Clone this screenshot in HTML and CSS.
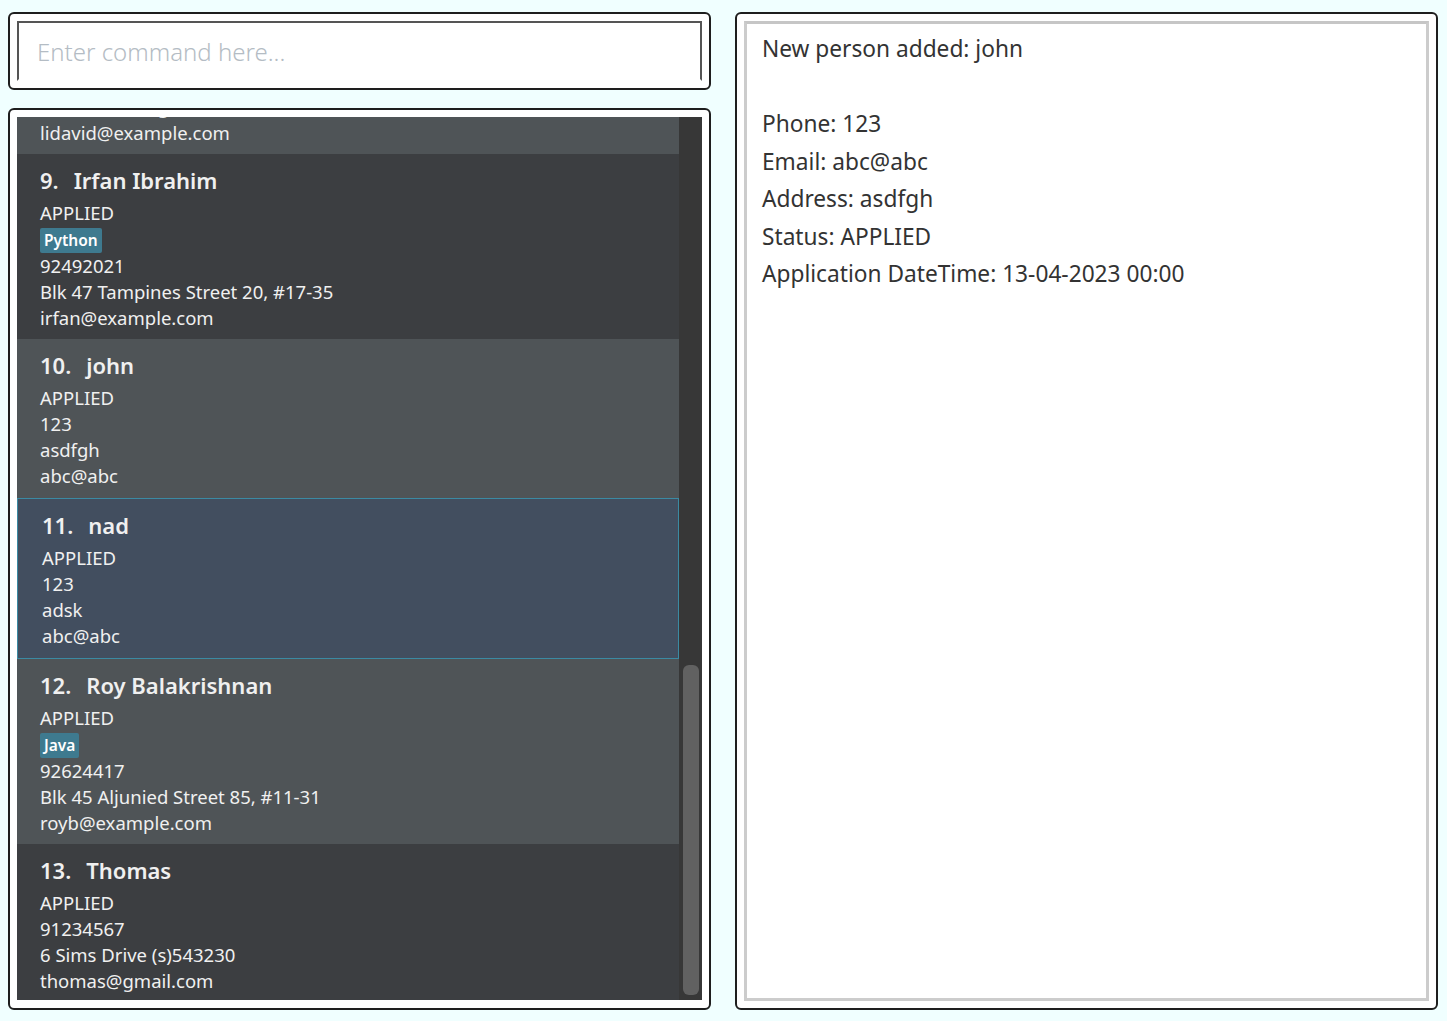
FILE: index.html
```html
<!DOCTYPE html>
<html>
<head>
<meta charset="utf-8">
<link rel="stylesheet" href="styles.css">
</head>
<body>
<div class="app">
  <div class="left">
    <div class="frame cmd-frame">
      <div class="cmd-box">Enter command here...</div>
    </div>
    <div class="frame list-frame">
      <div class="list-inner">
        <div class="cards">
          <div class="card light has-tag partial">
            <div class="title"><span class="idx">8.</span>David Li</div>
            <div class="line">APPLIED</div>
            <div class="tags"><span class="tag">family</span></div>
            <div class="line">91031282</div>
            <div class="line">Blk 436 Serangoon Gardens Street 26, #16-43</div>
            <div class="line">lidavid@example.com</div>
          </div>
          <div class="card dark has-tag">
            <div class="title"><span class="idx">9.</span>Irfan Ibrahim</div>
            <div class="line">APPLIED</div>
            <div class="tags"><span class="tag">Python</span></div>
            <div class="line">92492021</div>
            <div class="line">Blk 47 Tampines Street 20, #17-35</div>
            <div class="line">irfan@example.com</div>
          </div>
          <div class="card light">
            <div class="title"><span class="idx">10.</span>john</div>
            <div class="line">APPLIED</div>
            <div class="line">123</div>
            <div class="line">asdfgh</div>
            <div class="line">abc@abc</div>
          </div>
          <div class="card selected">
            <div class="title"><span class="idx">11.</span>nad</div>
            <div class="line">APPLIED</div>
            <div class="line">123</div>
            <div class="line">adsk</div>
            <div class="line">abc@abc</div>
          </div>
          <div class="card light has-tag">
            <div class="title"><span class="idx">12.</span>Roy Balakrishnan</div>
            <div class="line">APPLIED</div>
            <div class="tags"><span class="tag">Java</span></div>
            <div class="line">92624417</div>
            <div class="line">Blk 45 Aljunied Street 85, #11-31</div>
            <div class="line">royb@example.com</div>
          </div>
          <div class="card dark">
            <div class="title"><span class="idx">13.</span>Thomas</div>
            <div class="line">APPLIED</div>
            <div class="line">91234567</div>
            <div class="line">6 Sims Drive (s)543230</div>
            <div class="line">thomas@gmail.com</div>
          </div>
        </div>
        <div class="scrollbar"><div class="thumb"></div></div>
      </div>
    </div>
  </div>
  <div class="frame result-frame">
    <div class="result-box">
      <div class="r-line">New person added: john</div>
      <div class="r-line">&nbsp;</div>
      <div class="r-line">Phone: 123</div>
      <div class="r-line">Email: abc@abc</div>
      <div class="r-line">Address: asdfgh</div>
      <div class="r-line">Status: APPLIED</div>
      <div class="r-line">Application DateTime: 13-04-2023 00:00</div>
    </div>
  </div>
</div>
</body>
</html>
```
FILE: styles.css
```css
html, body {
  margin: 0;
  padding: 0;
  background: #f0ffff;
  font-family: "Noto Sans", "Open Sans", sans-serif;
}
.app {
  display: flex;
  gap: 24px;
  padding: 12px 0 0 8px;
  height: 998px;
}
.left {
  width: 703px;
  display: flex;
  flex-direction: column;
  gap: 18px;
}
.frame {
  box-sizing: border-box;
  border: 2px solid #1e1e1e;
  border-radius: 6px;
  background: #ffffff;
  padding: 7px;
}
.cmd-frame {
  height: 78px;
}
.cmd-box {
  box-sizing: border-box;
  height: 60px;
  border-left: 2px solid #555;
  border-top: 2px solid #555;
  border-right: 2px solid #555;
  border-bottom: 2px solid #fff;
  color: #b4bcc4;
  font-size: 24px;
  padding: 0 0 0 18px;
  line-height: 58px;
  font-weight: 300;
}
.list-frame {
  height: 902px;
}
.list-inner {
  height: 883px;
  display: flex;
  overflow: hidden;
  background: #3a3a3a;
}
.cards {
  width: 662px;
  overflow: hidden;
  display: flex;
  flex-direction: column;
}
.card {
  box-sizing: border-box;
  padding: 11px 0 0 23px;
  color: #f0f0f0;
  flex-shrink: 0;
}
.card.light { background: #4f5457; }
.card.dark { background: #3c3e41; }
.card.selected {
  background: #424e5f;
  border: 1px solid #3b8aa3;
  padding: 11px 0 0 24px;
}
.partial {
  margin-top: -148px;
}
.title {
  font-size: 22px;
  font-weight: 600;
  line-height: 30px;
  margin-bottom: 5px;
}
.idx {
  margin-right: 15px;
}
.line {
  font-size: 18.5px;
  line-height: 26px;
}
.card .line:last-child { margin-bottom: 9px; }
.card.has-tag .line:last-child { margin-bottom: 8px; }
.tags {
  height: 27px;
  display: flex;
  align-items: center;
  padding-top: 2px;
  box-sizing: border-box;
}
.tag {
  background: #3e7a8f;
  color: #ffffff;
  font-size: 15.5px;
  font-weight: 600;
  padding: 0 4px;
  line-height: 25px;
  border-radius: 2px;
}
.scrollbar {
  width: 23px;
  background: #373737;
  display: flex;
  flex-direction: column;
  align-items: center;
}
.thumb {
  margin-top: 548px;
  width: 16px;
  height: 330px;
  background: #616161;
  border-radius: 6px;
}
.result-frame {
  width: 703px;
  height: 998px;
}
.result-box {
  box-sizing: border-box;
  height: 980px;
  border: 3px solid #cccccc;
  border-top-color: #c6c6c6;
  padding: 6px 0 0 15px;
  color: #333333;
}
.r-line {
  font-size: 22.7px;
  line-height: 37.5px;
}
```
